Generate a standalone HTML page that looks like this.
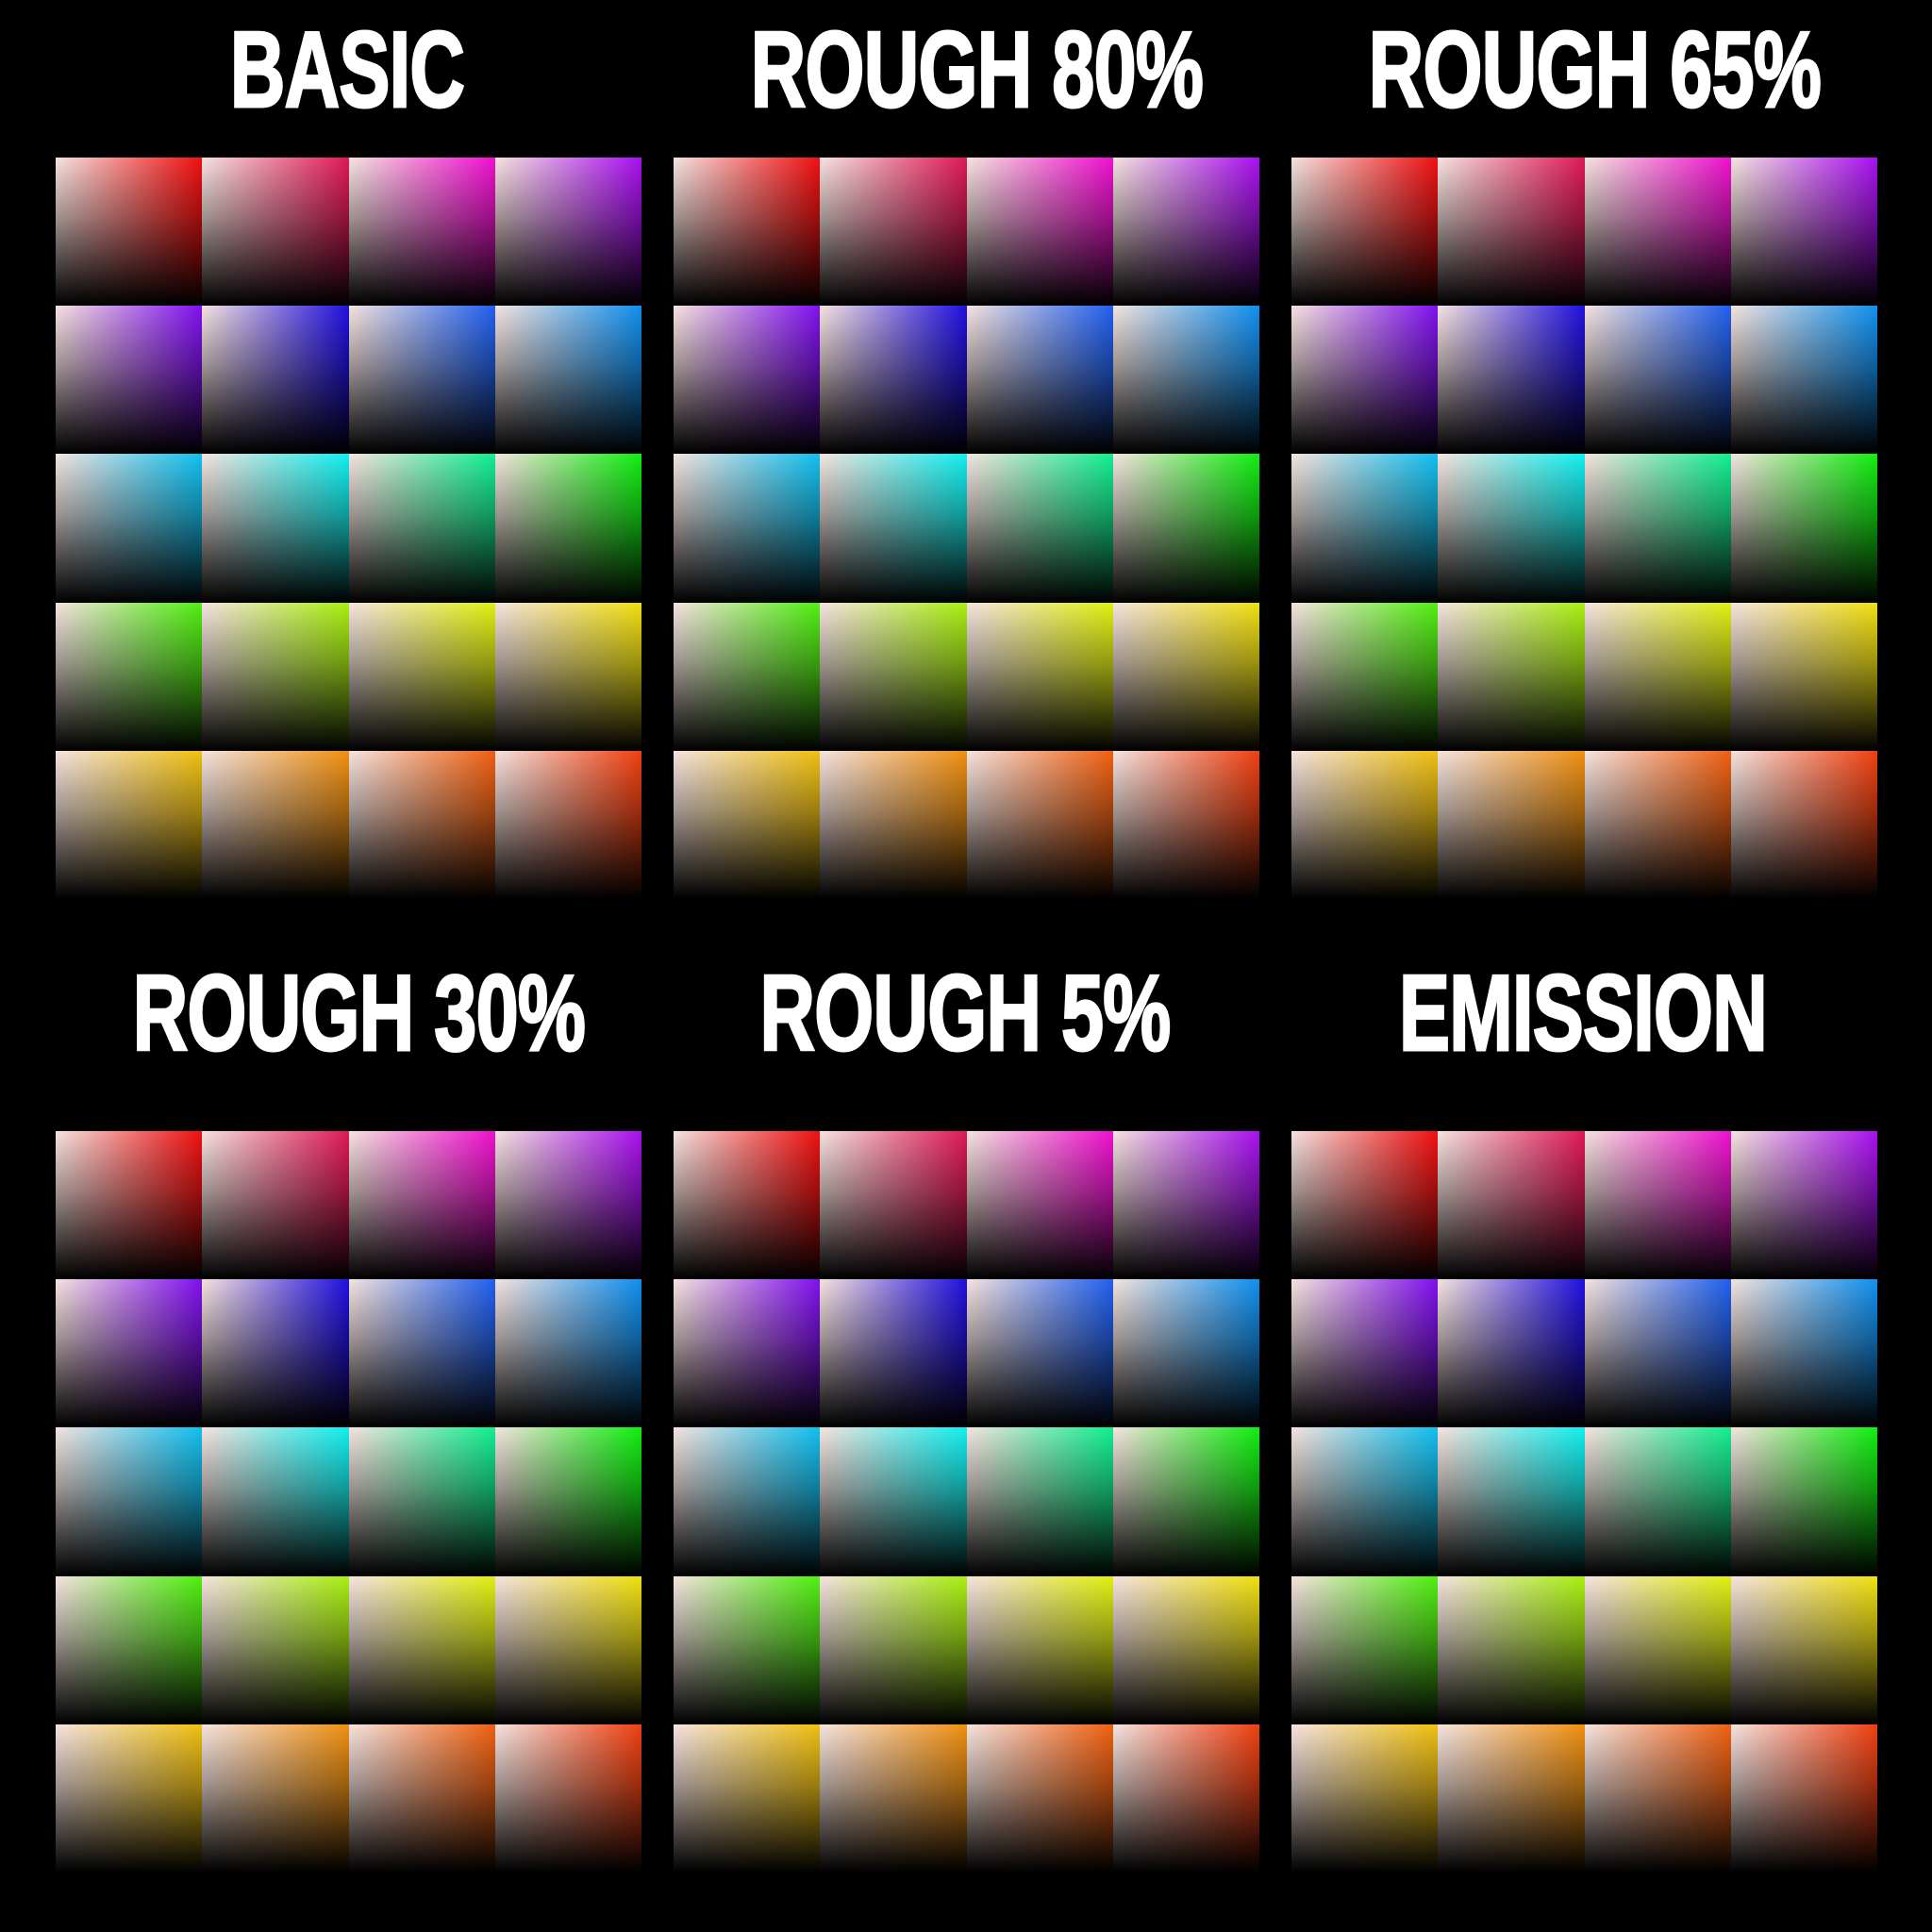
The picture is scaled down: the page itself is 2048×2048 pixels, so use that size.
<!DOCTYPE html>
<html><head><meta charset="utf-8">
<style>
html,body{margin:0;padding:0;background:#000;width:2048px;height:2048px;overflow:hidden}
.t{position:absolute;width:640px;text-align:center;white-space:nowrap;color:#fff;font-family:"Liberation Sans Narrow","Liberation Sans",sans-serif;font-weight:bold;font-size:114px;line-height:114px;transform:scaleX(0.71);letter-spacing:-1px;-webkit-text-stroke:3px #fff}
.g{position:absolute;width:621px;height:786px;display:grid;grid-template-columns:repeat(4,1fr);grid-template-rows:repeat(5,1fr)}
</style></head><body>
<div id="root"></div>
<script>
var cols=["#f01010","#e01858","#f010d0","#a810f0","#8010f0","#2010e0","#2060f0","#1090f0","#10c0f0","#10f0f0","#10f090","#10f010","#50f010","#a8f010","#e0f010","#f0e010","#f0c010","#f09010","#f06010","#f04010"];
var xs=[59,714,1369],ys=[167,1199],tys=[15,1015];
var titles=[["BASIC","ROUGH 80%","ROUGH 65%"],["ROUGH 30%","ROUGH 5%","EMISSION"]];
var h="";
for(var r=0;r<2;r++)for(var k=0;k<3;k++){
 h+='<div class="t" style="left:'+(xs[k]-11)+'px;top:'+(tys[r]+3)+'px">'+titles[r][k]+'</div>';
 h+='<div class="g" style="left:'+xs[k]+'px;top:'+ys[r]+'px">';
 for(var i=0;i<20;i++){
  h+='<div style="background:linear-gradient(to bottom,rgba(0,0,0,0) 0%,rgba(0,0,0,0.35) 40%,#000 100%),linear-gradient(to right,#f6e4e0,'+cols[i]+')"></div>';
 }
 h+='</div>';
}
document.getElementById("root").innerHTML=h;
</script>
</body></html>
